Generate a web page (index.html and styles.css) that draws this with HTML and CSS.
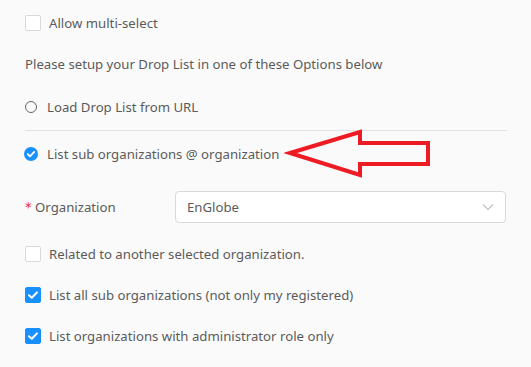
FILE: index.html
```html
<!DOCTYPE html>
<html>
<head>
<meta charset="utf-8">
<link rel="stylesheet" href="styles.css">
</head>
<body>
<div class="form">
  <label class="row r1"><span class="cb"></span><span class="lbl">Allow multi-select</span></label>
  <div class="row r2">Please setup your Drop List in one of these Options below</div>
  <label class="row r3"><span class="radio"></span><span class="rlbl">Load Drop List from URL</span></label>
  <div class="divider"></div>
  <label class="row r4">
    <svg class="radio-on" width="14" height="14" viewBox="0 0 14 14"><circle cx="7" cy="7" r="7" fill="#1890ff"/><path d="M3.8 7.2 L6 9.3 L10.2 4.9" fill="none" stroke="#fff" stroke-width="1.8" stroke-linecap="round" stroke-linejoin="round"/></svg>
    <span class="rlbl2">List sub organizations @ organization</span>
  </label>
  <div class="row r5">
    <div class="flabel"><span class="req">*</span> Organization</div>
    <div class="select"><span>EnGlobe</span>
      <svg width="12" height="8" viewBox="0 0 12 8"><path d="M1 1.5 L6 6.5 L11 1.5" fill="none" stroke="#bfbfbf" stroke-width="1.2"/></svg>
    </div>
  </div>
  <label class="row r6"><span class="cb"></span><span class="lbl">Related to another selected organization.</span></label>
  <label class="row r7"><span class="cb on"><svg width="16" height="16" viewBox="0 0 16 16"><path d="M4 8.2 L6.8 10.8 L12 5.4" fill="none" stroke="#fff" stroke-width="2" stroke-linecap="round" stroke-linejoin="round"/></svg></span><span class="lbl">List all sub organizations (not only my registered)</span></label>
  <label class="row r8"><span class="cb on"><svg width="16" height="16" viewBox="0 0 16 16"><path d="M4 8.2 L6.8 10.8 L12 5.4" fill="none" stroke="#fff" stroke-width="2" stroke-linecap="round" stroke-linejoin="round"/></svg></span><span class="lbl">List organizations with administrator role only</span></label>
</div>
<svg class="arrow" width="150" height="56" viewBox="284 126 150 56">
  <polygon points="290,153 360,132 360,143 428,143 428,164 360,164 360,175" fill="none" stroke="#ed1c24" stroke-width="4" stroke-linejoin="miter"/>
</svg>
</body>
</html>
```
FILE: styles.css
```css
html, body {
  margin: 0;
  padding: 0;
  background: #fafafa;
}
body {
  font-family: "Noto Sans", "Open Sans", sans-serif;
  font-size: 13.2px;
  color: #5a5a5a;
  width: 531px;
  height: 367px;
  overflow: hidden;
  position: relative;
}
.form {
  display: flex;
  flex-direction: column;
  padding: 13px 25px 0 25px;
}
.row {
  display: flex;
  align-items: center;
  height: 22px;
}
.r1 { height: 20px; }
.r2 { margin-top: 20px; }
.r3 { margin-top: 21px; }
.divider {
  margin-top: 12px;
  height: 1px;
  background: #e1e1e1;
  width: 482px;
}
.r4 { margin-top: 12px; }
.r5 { margin-top: 26px; height: 32px; }
.r6 { margin-top: 20px; }
.r7 { margin-top: 19px; }
.r8 { margin-top: 19px; }
.cb {
  box-sizing: border-box;
  width: 16px;
  height: 16px;
  border: 1px solid #d9d9d9;
  border-radius: 2px;
  background: #fff;
  flex: none;
  display: flex;
}
.cb.on {
  background: #1890ff;
  border-color: #1890ff;
}
.cb.on svg { margin: -1px; }
.lbl { margin-left: 8px; }
.radio {
  box-sizing: border-box;
  width: 12px;
  height: 12px;
  border: 1px solid #666;
  border-radius: 50%;
  flex: none;
}
.rlbl { margin-left: 10px; }
.radio-on { flex: none; margin-left: -1px; }
.rlbl2 { margin-left: 9px; }
.flabel {
  width: 150px;
  flex: none;
}
.req { color: #f5222d; font-family: "DejaVu Sans", sans-serif; }
.select {
  box-sizing: border-box;
  width: 332px;
  height: 32px;
  border: 1px solid #d9d9d9;
  border-radius: 4px;
  background: #fff;
  display: flex;
  align-items: center;
  justify-content: space-between;
  padding: 0 11px 0 11px;
}
.arrow {
  position: absolute;
  left: 284px;
  top: 126px;
}
```
